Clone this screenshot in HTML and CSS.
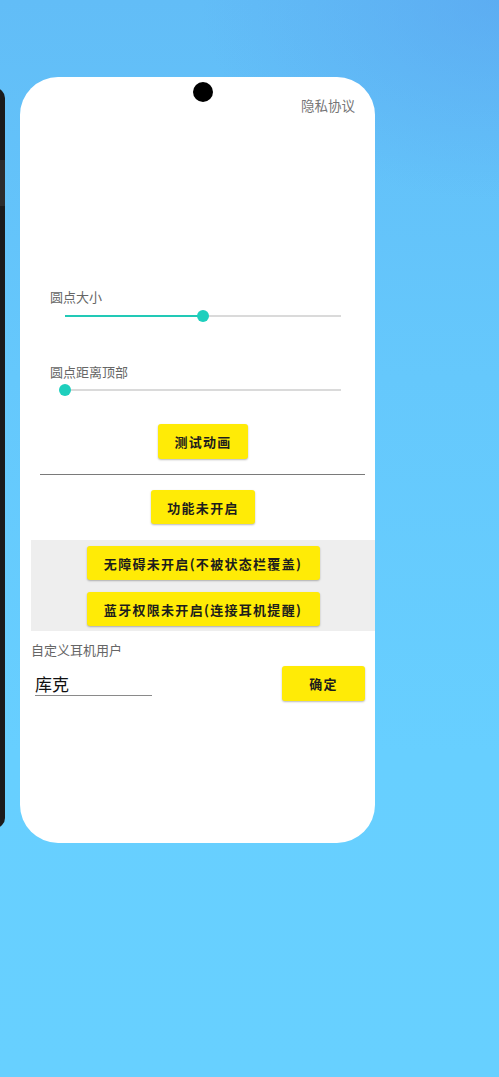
FILE: index.html
```html
<!DOCTYPE html>
<html lang="zh">
<head>
<meta charset="utf-8">
<title>设置</title>
<link rel="stylesheet" href="styles.css">
</head>
<body>
<div class="side-window"><div class="side-band"></div></div>
<div class="stage">
  <div class="card">
    <div class="camera"></div>
    <div class="top"><span class="privacy">隐私协议</span></div>
    <div class="panel">
      <div class="label label-indent first">圆点大小</div>
      <div class="slider s1">
        <div class="track"></div>
        <div class="fill" style="width: 50%"></div>
        <div class="thumb" style="left: 50%"></div>
      </div>
      <div class="label label-indent second">圆点距离顶部</div>
      <div class="slider s2">
        <div class="track"></div>
        <div class="fill" style="width: 0%"></div>
        <div class="thumb" style="left: 0%"></div>
      </div>
      <div class="btn-row test-row"><button class="btn">测试动画</button></div>
      <div class="divider"></div>
      <div class="btn-row func-row"><button class="btn short">功能未开启</button></div>
      <div class="gray">
        <button class="btn">无障碍未开启(不被状态栏覆盖)</button>
        <button class="btn">蓝牙权限未开启(连接耳机提醒)</button>
      </div>
      <div class="label custom-label">自定义耳机用户</div>
      <div class="input-row">
        <div class="input">库克</div>
        <button class="btn ok">确定</button>
      </div>
    </div>
  </div>
</div>
</body>
</html>
```

FILE: styles.css
```css
html, body {
  margin: 0;
  padding: 0;
}
body {
  width: 499px;
  height: 1077px;
  overflow: hidden;
  position: relative;
  font-family: "Noto Sans CJK SC", "Noto Sans", Roboto, sans-serif;
  background:
    radial-gradient(ellipse 300px 200px at 100% 0%, rgba(88, 160, 238, 0.55), rgba(88, 160, 238, 0) 100%),
    linear-gradient(to bottom, #62bdf7 0%, #65c8fc 35%, #67cfff 70%, #67d0ff 100%);
}
.side-window {
  position: absolute;
  left: -20px;
  top: 88px;
  width: 25px;
  height: 740px;
  background: #1b1b1c;
  border-radius: 10px;
}
.side-band {
  margin-top: 72px;
  height: 46px;
  background: #2c2c2d;
}
.stage {
  padding: 77px 0 0 20px;
}
.card {
  position: relative;
  width: 355px;
  height: 766px;
  background: #ffffff;
  border-radius: 38px;
}
.camera {
  position: absolute;
  left: 173px;
  top: 5px;
  width: 20px;
  height: 20px;
  border-radius: 50%;
  background: #000;
}
.top {
  display: flex;
  justify-content: flex-end;
  padding: 20px 20px 0 0;
}
.privacy {
  font-size: 13.5px;
  line-height: 17px;
  color: #767676;
}
.panel {
  margin-left: 11px;
  width: 344px;
}
.label {
  font-size: 13px;
  line-height: 16px;
  color: #666;
}
.label-indent {
  padding-left: 19px;
}
.first {
  margin-top: 175px;
}
.second {
  margin-top: 42px;
}
.slider {
  position: relative;
  margin-left: 34px;
  width: 276px;
  height: 12px;
}
.s1 {
  margin-top: 5px;
}
.s2 {
  margin-top: 4px;
}
.track {
  position: absolute;
  left: 0;
  right: 0;
  top: 5px;
  height: 2px;
  background: #dadada;
}
.fill {
  position: absolute;
  left: 0;
  top: 5px;
  height: 2px;
  background: #22c9b6;
}
.thumb {
  position: absolute;
  top: 0;
  width: 12px;
  height: 12px;
  margin-left: -6px;
  border-radius: 50%;
  background: #1ecfbd;
}
.btn-row {
  display: flex;
  justify-content: center;
}
.test-row {
  margin-top: 28px;
}
.func-row {
  margin-top: 15px;
}
.btn {
  height: 35px;
  padding: 0 16px;
  border: 0;
  border-radius: 3px;
  background: #ffeb06;
  color: #1d1d1d;
  font-family: "Noto Sans CJK SC", "Noto Sans", Roboto, sans-serif;
  font-size: 13px;
  font-weight: 700;
  letter-spacing: 1.3px;
  box-shadow: 0 1px 2px rgba(0, 0, 0, 0.28);
}
.short {
  height: 34px;
}
.divider {
  margin: 15px 10px 0 9px;
  height: 1px;
  background: #7a7a7a;
}
.gray {
  margin-top: 16px;
  padding: 6px 0 5px;
  background: #eeeeee;
  display: flex;
  flex-direction: column;
  align-items: center;
  gap: 12px;
}
.gray .btn {
  width: 233px;
  height: 34px;
  padding: 0;
}
.custom-label {
  margin-top: 11px;
}
.input-row {
  display: flex;
  align-items: flex-start;
  margin-top: 8px;
}
.input {
  margin: 7px 0 0 4px;
  width: 117px;
  font-size: 17px;
  line-height: 22px;
  height: 22px;
  color: #111;
  border-bottom: 1px solid #8a8a8a;
}
.ok {
  margin-left: auto;
  margin-right: 10px;
  width: 83px;
  padding: 0;
}
```
